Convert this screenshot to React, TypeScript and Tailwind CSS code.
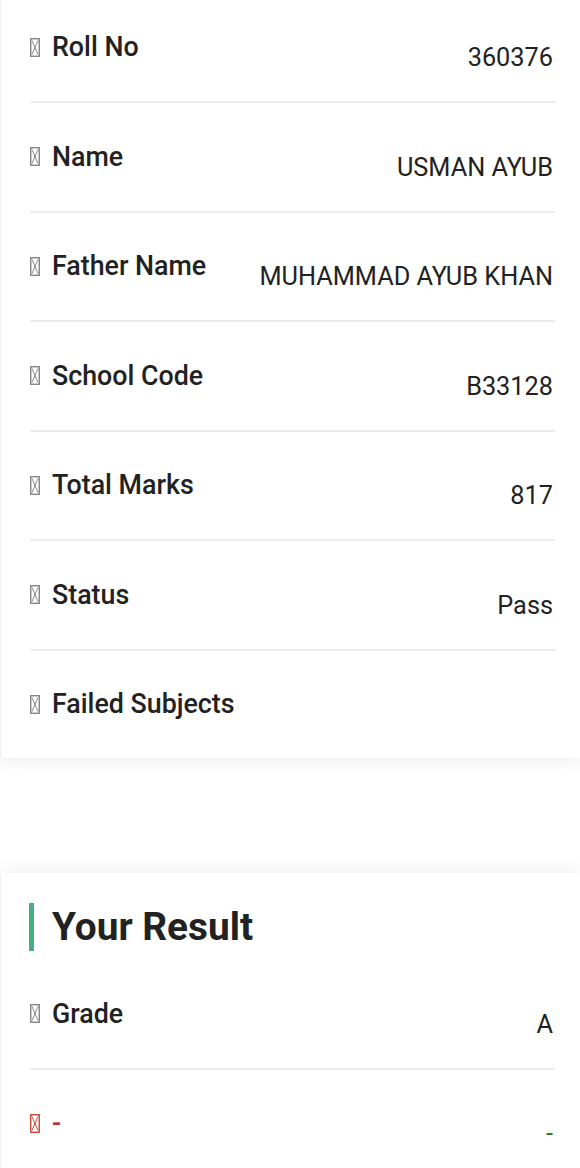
import React from 'react';

const rows = [
  { label: 'Roll No', value: '360376' },
  { label: 'Name', value: 'USMAN AYUB' },
  { label: 'Father Name', value: 'MUHAMMAD AYUB KHAN' },
  { label: 'School Code', value: 'B33128' },
  { label: 'Total Marks', value: '817' },
  { label: 'Status', value: 'Pass' },
  { label: 'Failed Subjects', value: '' },
];

// the missing-glyph box the device shows in place of an emoji
const Tofu = ({ color = '#7a7a7a' }: { color?: string }) => (
  <svg width="10" height="19" viewBox="0 0 10 19" className="shrink-0">
    <rect x="0.75" y="0.75" width="8.5" height="17.5" fill="none" stroke={color} strokeWidth="1.3" />
    <path d="M2 2.5 L8 16.5 M8 2.5 L2 16.5" stroke={color} strokeWidth="0.9" fill="none" />
  </svg>
);

const Row = ({
  label,
  value,
  first,
  last,
  labelClass = 'text-[#222]',
  valueClass = 'text-[#222]',
  tofu,
}: {
  label: string;
  value: string;
  first?: boolean;
  last?: boolean;
  labelClass?: string;
  valueClass?: string;
  tofu?: string;
}) => (
  <div
    className={`flex justify-between items-start ${first ? 'pt-[32px]' : 'pt-[38.5px]'} pb-[28px] ${
      last ? '' : 'border-b-2 border-[#ececec]'
    }`}
  >
    <div className="flex items-center gap-[12px] h-[30px]">
      <Tofu color={tofu} />
      <span className={`text-[26.8px] leading-[30px] font-medium ${labelClass}`}>{label}</span>
    </div>
    <div className={`mt-[11px] h-[30px] pr-[2px] text-[25.3px] leading-[30px] text-right ${valueClass}`}>{value}</div>
  </div>
);

export default function App() {
  return (
    <div className="min-h-[1168px] bg-white overflow-hidden" style={{ fontFamily: 'Roboto, "Noto Sans", sans-serif' }}>
      <div className="bg-white border-l border-[#f0f0f0] shadow-[0_4px_16px_rgba(0,0,0,0.07)]">
        <div className="ml-[29px] mr-[25px]">
          {rows.map((r, i) => (
            <Row key={r.label} label={r.label} value={r.value} first={i === 0} last={i === rows.length - 1} />
          ))}
        </div>
      </div>

      <div className="mt-[115px] bg-white border-l border-[#f0f0f0] shadow-[0_-2px_16px_rgba(0,0,0,0.07)]">
        <div className="ml-[28px] mr-[25px] pt-[30px]">
          <h2 className="border-l-[5px] border-[#43b07d] pl-[18px] h-[48px] text-[38.8px] leading-[48px] font-bold text-[#222]">
            Your Result
          </h2>
          <div className="pt-[9px] ml-[1px]">
            <Row label="Grade" value="A" />
          </div>
          <div className="ml-[1px]">
            <Row label="-" value="-" last labelClass="text-[#c62828]" valueClass="text-[#2e7d32]" tofu="#c0392b" />
          </div>
        </div>
      </div>
    </div>
  );
}
